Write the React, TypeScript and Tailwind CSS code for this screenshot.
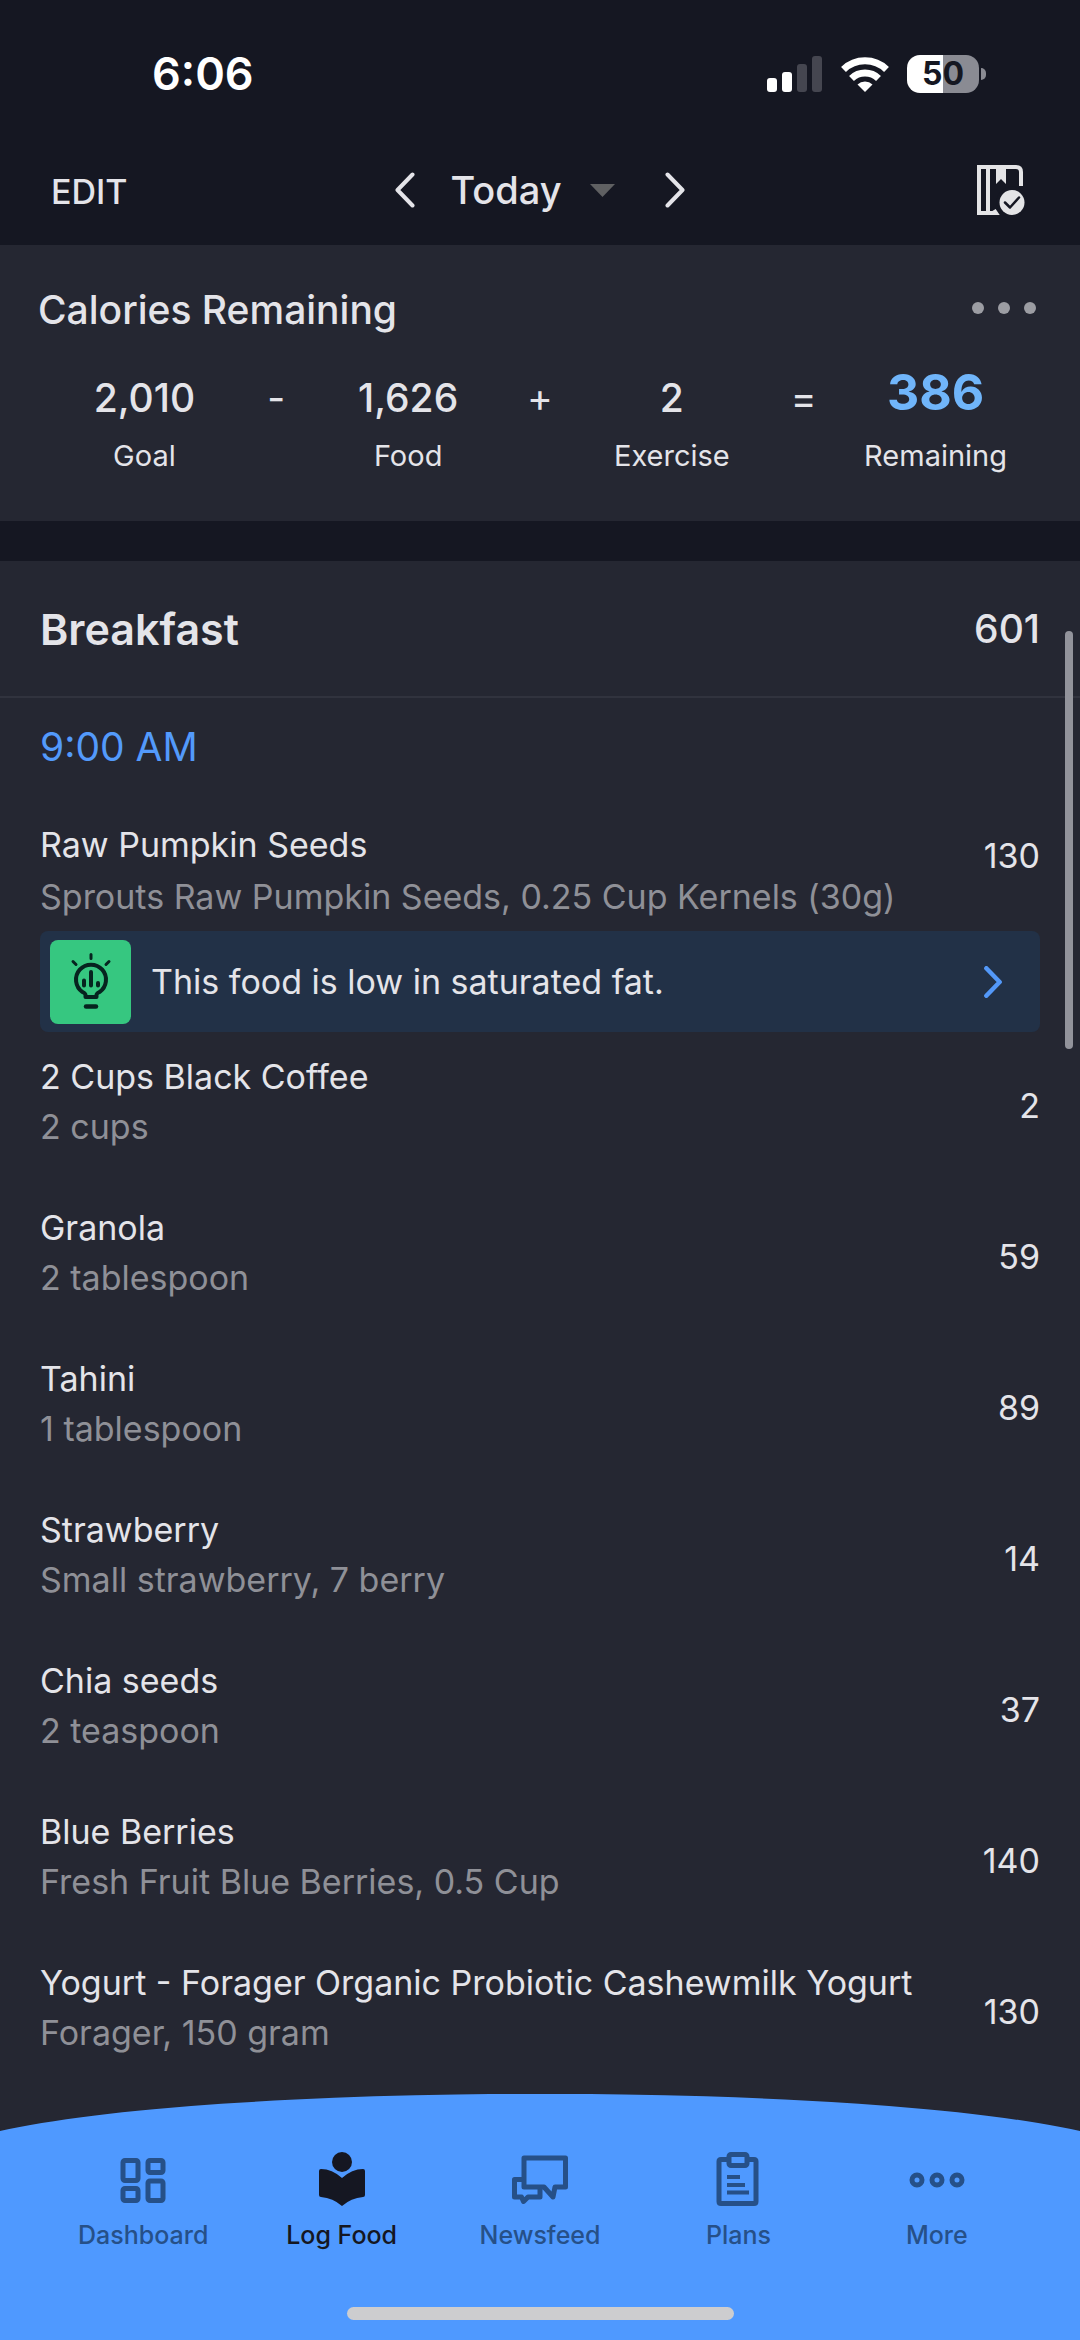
import type { ReactNode } from "react";

const totals = [
  { value: "2,010", label: "Goal", sign: "-" },
  { value: "1,626", label: "Food", sign: "+" },
  { value: "2", label: "Exercise", sign: "=" },
];

const foods = [
  { name: "2 Cups Black Coffee", detail: "2 cups", calories: 2 },
  { name: "Granola", detail: "2 tablespoon", calories: 59 },
  { name: "Tahini", detail: "1 tablespoon", calories: 89 },
  { name: "Strawberry", detail: "Small strawberry, 7 berry", calories: 14 },
  { name: "Chia seeds", detail: "2 teaspoon", calories: 37 },
  { name: "Blue Berries", detail: "Fresh Fruit Blue Berries, 0.5 Cup", calories: 140 },
  { name: "Yogurt - Forager Organic Probiotic Cashewmilk Yogurt", detail: "Forager, 150 gram", calories: 130 },
];

function StatusBar() {
  return (
    <div className="flex h-[148px] items-center justify-between pr-[94px] pl-[152px]">
      <span className="text-[45px] leading-[54px] font-semibold text-white">6:06</span>
      <div className="flex items-center gap-[18px]">
        <svg width="56" height="36" viewBox="0 0 56 36" fill="#fff" aria-hidden="true">
          <rect x="0" y="22" width="10" height="14" rx="3" />
          <rect x="15" y="16" width="10" height="20" rx="3" />
          <rect x="30" y="8" width="10" height="28" rx="3" fill="#454650" />
          <rect x="45" y="0" width="10" height="36" rx="3" fill="#454650" />
        </svg>
        <svg width="48" height="36" viewBox="0 0 48 36" fill="none" stroke="#fff" strokeWidth="7" aria-hidden="true">
          <path d="M2.5 13.5a31 31 0 0 1 43 0" />
          <path d="M10.5 22.5a19.5 19.5 0 0 1 27 0" />
          <path d="M24 36l-7.5-7.6a11 11 0 0 1 15 0z" fill="#fff" stroke="none" />
        </svg>
        <div className="flex items-center gap-[2px]">
          <div className="flex h-[38px] w-[72px] items-center justify-center rounded-[13px] bg-linear-to-r from-white from-50% to-[#8a8b93] to-50% text-[32px] leading-none font-bold text-[#151722]">
            50
          </div>
          <div className="h-3 w-[5px] rounded-r-full bg-[#8a8b93]" />
        </div>
      </div>
    </div>
  );
}

function Chevron({ flip, className }: { flip?: boolean; className: string }) {
  return (
    <svg viewBox="0 0 20 36" fill="none" stroke="currentColor" strokeLinecap="round" strokeLinejoin="round" className={className} aria-hidden="true">
      <path d={flip ? "M17.500 2.500L2.500 18l15 15.500" : "M2.500 2.500l15 15.500-15 15.500"} />
    </svg>
  );
}

function DiaryHeader() {
  return (
    <div className="grid grid-cols-[1fr_auto_1fr] items-center px-[51px] pt-4 pb-[25px] text-[#e4e4e9]">
      <button className="justify-self-start text-[34px] leading-[50px] font-medium">EDIT</button>
      <div className="flex items-center pb-1">
        <button aria-label="Previous day">
          <Chevron flip className="h-9 w-5 stroke-4" />
        </button>
        <button className="flex items-center gap-[28px] pr-[50px] pl-[35px] text-[38px] leading-[50px] font-medium">
          Today
          <svg width="25" height="13" viewBox="0 0 25 13" fill="#5f6062" aria-hidden="true">
            <path d="M0 0h25L12.500 13z" />
          </svg>
        </button>
        <button aria-label="Next day">
          <Chevron className="h-9 w-5 stroke-4" />
        </button>
      </div>
      <button aria-label="Complete diary" className="justify-self-end pb-1">
        <svg width="52" height="52" viewBox="0 0 52 52" fill="none" aria-hidden="true">
          <path d="M44 22V8q0-5-5-5H2v46h17l-2-3" stroke="#e4e4e6" strokeWidth="4" />
          <path d="M11 3v46" stroke="#e4e4e6" strokeWidth="4" />
          <path d="M19 2h10v18l-5-5-5 5z" fill="#e4e4e6" />
          <circle cx="35" cy="38" r="15.500" fill="#151722" />
          <circle cx="35" cy="38.500" r="12.500" fill="#e4e4e6" />
          <path d="M28 38.500l5 5 9-10" stroke="#151722" strokeWidth="2.500" strokeLinecap="round" strokeLinejoin="round" />
        </svg>
      </button>
    </div>
  );
}

function CaloriesCard() {
  return (
    <section className="bg-[#252732] px-[38px] pt-10 pb-[34px] text-[#e4e4e9]">
      <div className="flex items-center justify-between">
        <h2 className="text-[39px] leading-[50px] font-medium">Calories Remaining</h2>
        <button aria-label="More options" className="flex gap-[14px] pr-[6px] pb-1">
          <span className="size-3 rounded-full bg-[#9c9da3]" />
          <span className="size-3 rounded-full bg-[#9c9da3]" />
          <span className="size-3 rounded-full bg-[#9c9da3]" />
        </button>
      </div>
      <div className="grid grid-cols-[5fr_3fr_5fr_3fr_5fr_3fr_5fr] justify-items-center px-6 pt-9 text-center">
        {totals.map((t) => (
          <div key={t.label} className="contents">
            <div>
              <p className="text-[39px] leading-[54px] font-medium">{t.value}</p>
              <p className="text-[29px] leading-[62px]">{t.label}</p>
            </div>
            <span className="text-[39px] leading-[54px]">{t.sign}</span>
          </div>
        ))}
        <div>
          <p className="pb-3 text-[50px] leading-[42px] font-bold text-[#70b5fa]">386</p>
          <p className="text-[29px] leading-[62px]">Remaining</p>
        </div>
      </div>
    </section>
  );
}

function FoodRow({ name, detail, calories }: { name: string; detail: string; calories: number }) {
  return (
    <li className="flex h-[151px] items-center justify-between">
      <div className="pb-3">
        <p className="text-[34px] leading-[50px]">{name}</p>
        <p className="text-[34px] leading-[50px] text-[#8f9097]">{detail}</p>
      </div>
      <span className="pb-1 text-[34px] leading-[50px]">{calories}</span>
    </li>
  );
}

function InsightBanner() {
  return (
    <button className="flex h-[101px] w-full items-center rounded-lg bg-[#223147] pr-[38px] pl-[10px] text-left">
      <span className="flex h-[84px] w-[81px] items-center justify-center rounded-lg bg-[#36c780]">
        <svg width="42" height="58" viewBox="0 0 42 58" fill="none" stroke="#06241f" strokeLinecap="round" aria-hidden="true">
          <path d="M21 1.500v4M3 8.500l3 3M39 8.500l-3 3" strokeWidth="3" />
          <path d="M15.500 44v-2q0-1.500-3-3a15 15 0 1 1 17 0q-3 1.500-3 3v2z" strokeWidth="4" strokeLinejoin="round" />
          <path d="M14 27.500v5M21 19v13.500M28 30v2.500" strokeWidth="4" />
          <path d="M16 53.500h10" strokeWidth="4.500" />
        </svg>
      </span>
      <span className="flex-1 pl-5 text-[34px] leading-[50px]">This food is low in saturated fat.</span>
      <Chevron className="h-8 w-[18px] stroke-5 text-[#5398f8]" />
    </button>
  );
}

function Meal() {
  return (
    <section className="relative mt-10 flex-1 bg-[#252732] text-[#e4e4e9]">
      <div className="flex h-[135px] items-center justify-between px-10">
        <h2 className="text-[43px] leading-[50px] font-semibold">Breakfast</h2>
        <span className="text-[39px] leading-[50px] font-medium">601</span>
      </div>
      <div className="border-t-2 border-[#31333e] px-10 pt-[22px]">
        <h3 className="text-[39px] leading-[54px] text-[#539afb]">9:00 AM</h3>
        <div className="flex justify-between pt-[45px] pb-2">
          <div>
            <p className="text-[34px] leading-[52px]">Raw Pumpkin Seeds</p>
            <p className="text-[34px] leading-[52px] text-[#8f9097]">Sprouts Raw Pumpkin Seeds, 0.25 Cup Kernels (30g)</p>
          </div>
          <span className="pt-3 text-[34px] leading-[50px]">130</span>
        </div>
        <InsightBanner />
        <ul>
          {foods.map((food) => (
            <FoodRow key={food.name} {...food} />
          ))}
        </ul>
      </div>
      {/* scroll thumb */}
      <div className="absolute top-[70px] right-[7px] h-[418px] w-2 rounded-full bg-[#92939b]" />
    </section>
  );
}

function Tab({ label, active, children }: { label: string; active?: boolean; children: ReactNode }) {
  return (
    <a href="#" className={active ? "flex flex-1 flex-col items-center text-[#151722]" : "flex flex-1 flex-col items-center text-[#265088]"}>
      <svg width="56" height="56" viewBox="0 0 56 56" fill="none" stroke="currentColor" strokeWidth="5" strokeLinejoin="round" aria-hidden="true">
        {children}
      </svg>
      <span className="pt-3 text-[25px] leading-[32px] font-medium">{label}</span>
    </a>
  );
}

function TabBar() {
  return (
    <nav className="bg-[#252732]">
      <svg viewBox="0 0 1080 37" preserveAspectRatio="none" className="block h-[37px] w-full" aria-hidden="true">
        <path d="M0 37A600 66 0 0 1 1080 37Z" fill="#4f99ff" />
      </svg>
      <div className="bg-[#4f99ff] px-11 pt-5">
        <div className="flex">
          <Tab label="Dashboard">
            <rect x="8" y="9.500" width="15" height="20" rx="2" />
            <rect x="33" y="9.500" width="15" height="12" rx="2" />
            <rect x="8" y="37.500" width="15" height="12" rx="2" />
            <rect x="33" y="30" width="15" height="19.500" rx="2" />
          </Tab>
          <Tab label="Log Food" active>
            <circle cx="28" cy="11" r="10" fill="currentColor" stroke="none" />
            <path d="M28 27Q18 18 7 18q-2 0-2 2v24q0 2 2 2 12 1 21 9 9-8 21-9 2 0 2-2V20q0-2-2-2-11 0-21 9z" fill="currentColor" stroke="none" />
          </Tab>
          <Tab label="Newsfeed">
            <path d="M12 7h41.500v29H43l-2 10-9-10H12z" />
            <path d="M12 28.500H2.500V46h7l2 4.500 4.500-4.500h12v-8" />
          </Tab>
          <Tab label="Plans">
            <path d="M18 8.500h-7q-2 0-2 2v40q0 2 2 2h33q2 0 2-2v-40q0-2-2-2h-7" />
            <rect x="19" y="3.500" width="18" height="11" rx="2" />
            <path d="M17 26h13M17 34h18M17 41.500h22" strokeWidth="4" />
          </Tab>
          <Tab label="More">
            <circle cx="8" cy="29" r="5" />
            <circle cx="28" cy="29" r="5" />
            <circle cx="48" cy="29" r="5" />
          </Tab>
        </div>
        <div className="mx-auto mt-[56px] h-[33px] w-[387px]">
          <div className="h-[13px] rounded-full bg-[#cdcdcf]" />
        </div>
      </div>
    </nav>
  );
}

export default function App() {
  return (
    <main className="flex min-h-screen flex-col bg-[#151722] font-['Inter',sans-serif]">
      <header>
        <StatusBar />
        <DiaryHeader />
      </header>
      <CaloriesCard />
      <Meal />
      <TabBar />
    </main>
  );
}
